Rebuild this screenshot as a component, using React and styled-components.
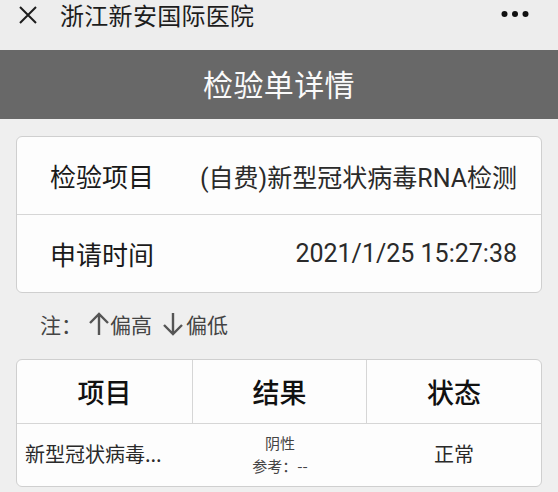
import React from "react";
import styled, { createGlobalStyle } from "styled-components";

const GlobalStyle = createGlobalStyle`
  html, body {
    margin: 0;
    padding: 0;
    background: #efefef;
  }
  body {
    font-family: "Noto Sans CJK SC", "Noto Sans", sans-serif;
    color: #1f1f1f;
  }
`;

const TopBar = styled.header`
  height: 50px;
  display: flex;
  align-items: flex-start;
  padding: 0 0 0 18px;
  background: #ededed;
  box-sizing: border-box;
  .close {
    margin-top: 5px;
  }
  h1 {
    margin: 0 0 0 22px;
    font-size: 24px;
    font-weight: 400;
    line-height: 30px;
    color: #1d1d1d;
    letter-spacing: 0.3px;
  }
  .more {
    margin-left: auto;
    margin-right: 29px;
    margin-top: 10px;
  }
`;

const PageTitle = styled.div`
  height: 69px;
  background: #686868;
  color: #fafafa;
  display: flex;
  align-items: center;
  justify-content: center;
  font-size: 30px;
  letter-spacing: 0.4px;
  padding-bottom: 4px;
  box-sizing: border-box;
`;

const Card = styled.section`
  margin: ${(p) => p.$top}px 16px 0;
  background: #fdfdfd;
  border: 1px solid #cfcfcf;
  border-radius: 6px;
  overflow: hidden;
`;

const InfoRow = styled.div`
  height: 77px;
  display: flex;
  align-items: center;
  justify-content: space-between;
  padding: 0 24px 0 33px;
  border-top: ${(p) => (p.$first ? "none" : "1px solid #d6d6d6")};
  .label {
    font-size: 26px;
    color: #1a1a1a;
  }
`;

const Value = styled.span`
  font-family: Roboto, "Noto Sans CJK SC", sans-serif;
  font-size: 25px;
  color: #2a2a2a;
`;

const Note = styled.div`
  display: flex;
  align-items: center;
  padding: 16px 0 0 40px;
  height: 46px;
  box-sizing: border-box;
  font-size: 21px;
  color: #444;
  span {
    display: inline-flex;
    align-items: center;
  }
  .up {
    margin-left: 6px;
  }
  .down {
    margin-left: 10px;
  }
  .down svg {
    margin-right: 2px;
  }
`;

const Grid = styled.div`
  display: grid;
  grid-template-columns: 176px 174px 1fr;
`;

const HeadCell = styled.div`
  height: 63px;
  display: flex;
  align-items: center;
  justify-content: center;
  font-size: 27px;
  font-weight: 500;
  color: #111;
  border-bottom: 1px solid #d6d6d6;
  border-right: ${(p) => (p.$last ? "none" : "1px solid #d6d6d6")};
`;

const BodyCell = styled.div`
  height: 62px;
  display: flex;
  flex-direction: column;
  align-items: ${(p) => (p.$left ? "flex-start" : "center")};
  justify-content: center;
  padding-left: ${(p) => (p.$left ? "8px" : "0")};
  padding-bottom: 3px;
  box-sizing: border-box;
  font-size: 20px;
  color: #2a2a2a;
  white-space: nowrap;
  .small {
    font-size: 15px;
    line-height: 23px;
    color: #444;
  }
`;

const CloseIcon = () => (
  <svg className="close" width="20" height="20" viewBox="0 0 20 20">
    <path d="M2 2 L18 18 M18 2 L2 18" stroke="#1d1d1d" strokeWidth="2" fill="none" />
  </svg>
);

const MoreIcon = () => (
  <svg className="more" width="28" height="8" viewBox="0 0 28 8">
    <circle cx="3.5" cy="4" r="3" fill="#111" />
    <circle cx="14" cy="4" r="3" fill="#111" />
    <circle cx="24.5" cy="4" r="3" fill="#111" />
  </svg>
);

const Arrow = ({ down }) => (
  <svg width="22" height="24" viewBox="0 0 22 24" style={{ transform: down ? "rotate(180deg)" : "none" }}>
    <path d="M11 2 L11 23 M2 11 L11 2 L20 11" stroke="#555" strokeWidth="2.4" fill="none" />
  </svg>
);

const App = () => {
  return (
    <>
      <GlobalStyle />
      <TopBar>
        <CloseIcon />
        <h1>浙江新安国际医院</h1>
        <MoreIcon />
      </TopBar>
      <PageTitle>检验单详情</PageTitle>

      <Card $top={17}>
        <InfoRow $first>
          <span className="label">检验项目</span>
          <Value>(自费)新型冠状病毒RNA检测</Value>
        </InfoRow>
        <InfoRow>
          <span className="label">申请时间</span>
          <Value>2021/1/25 15:27:38</Value>
        </InfoRow>
      </Card>

      <Note>
        <span>注：</span>
        <span className="up">
          <Arrow />
          偏高
        </span>
        <span className="down">
          <Arrow down />
          偏低
        </span>
      </Note>

      <Card $top={20}>
        <Grid>
          <HeadCell>项目</HeadCell>
          <HeadCell>结果</HeadCell>
          <HeadCell $last>状态</HeadCell>
          <BodyCell $left>新型冠状病毒...</BodyCell>
          <BodyCell>
            <span className="small">阴性</span>
            <span className="small">参考：--</span>
          </BodyCell>
          <BodyCell>正常</BodyCell>
        </Grid>
      </Card>
    </>
  );
};

export default App;
